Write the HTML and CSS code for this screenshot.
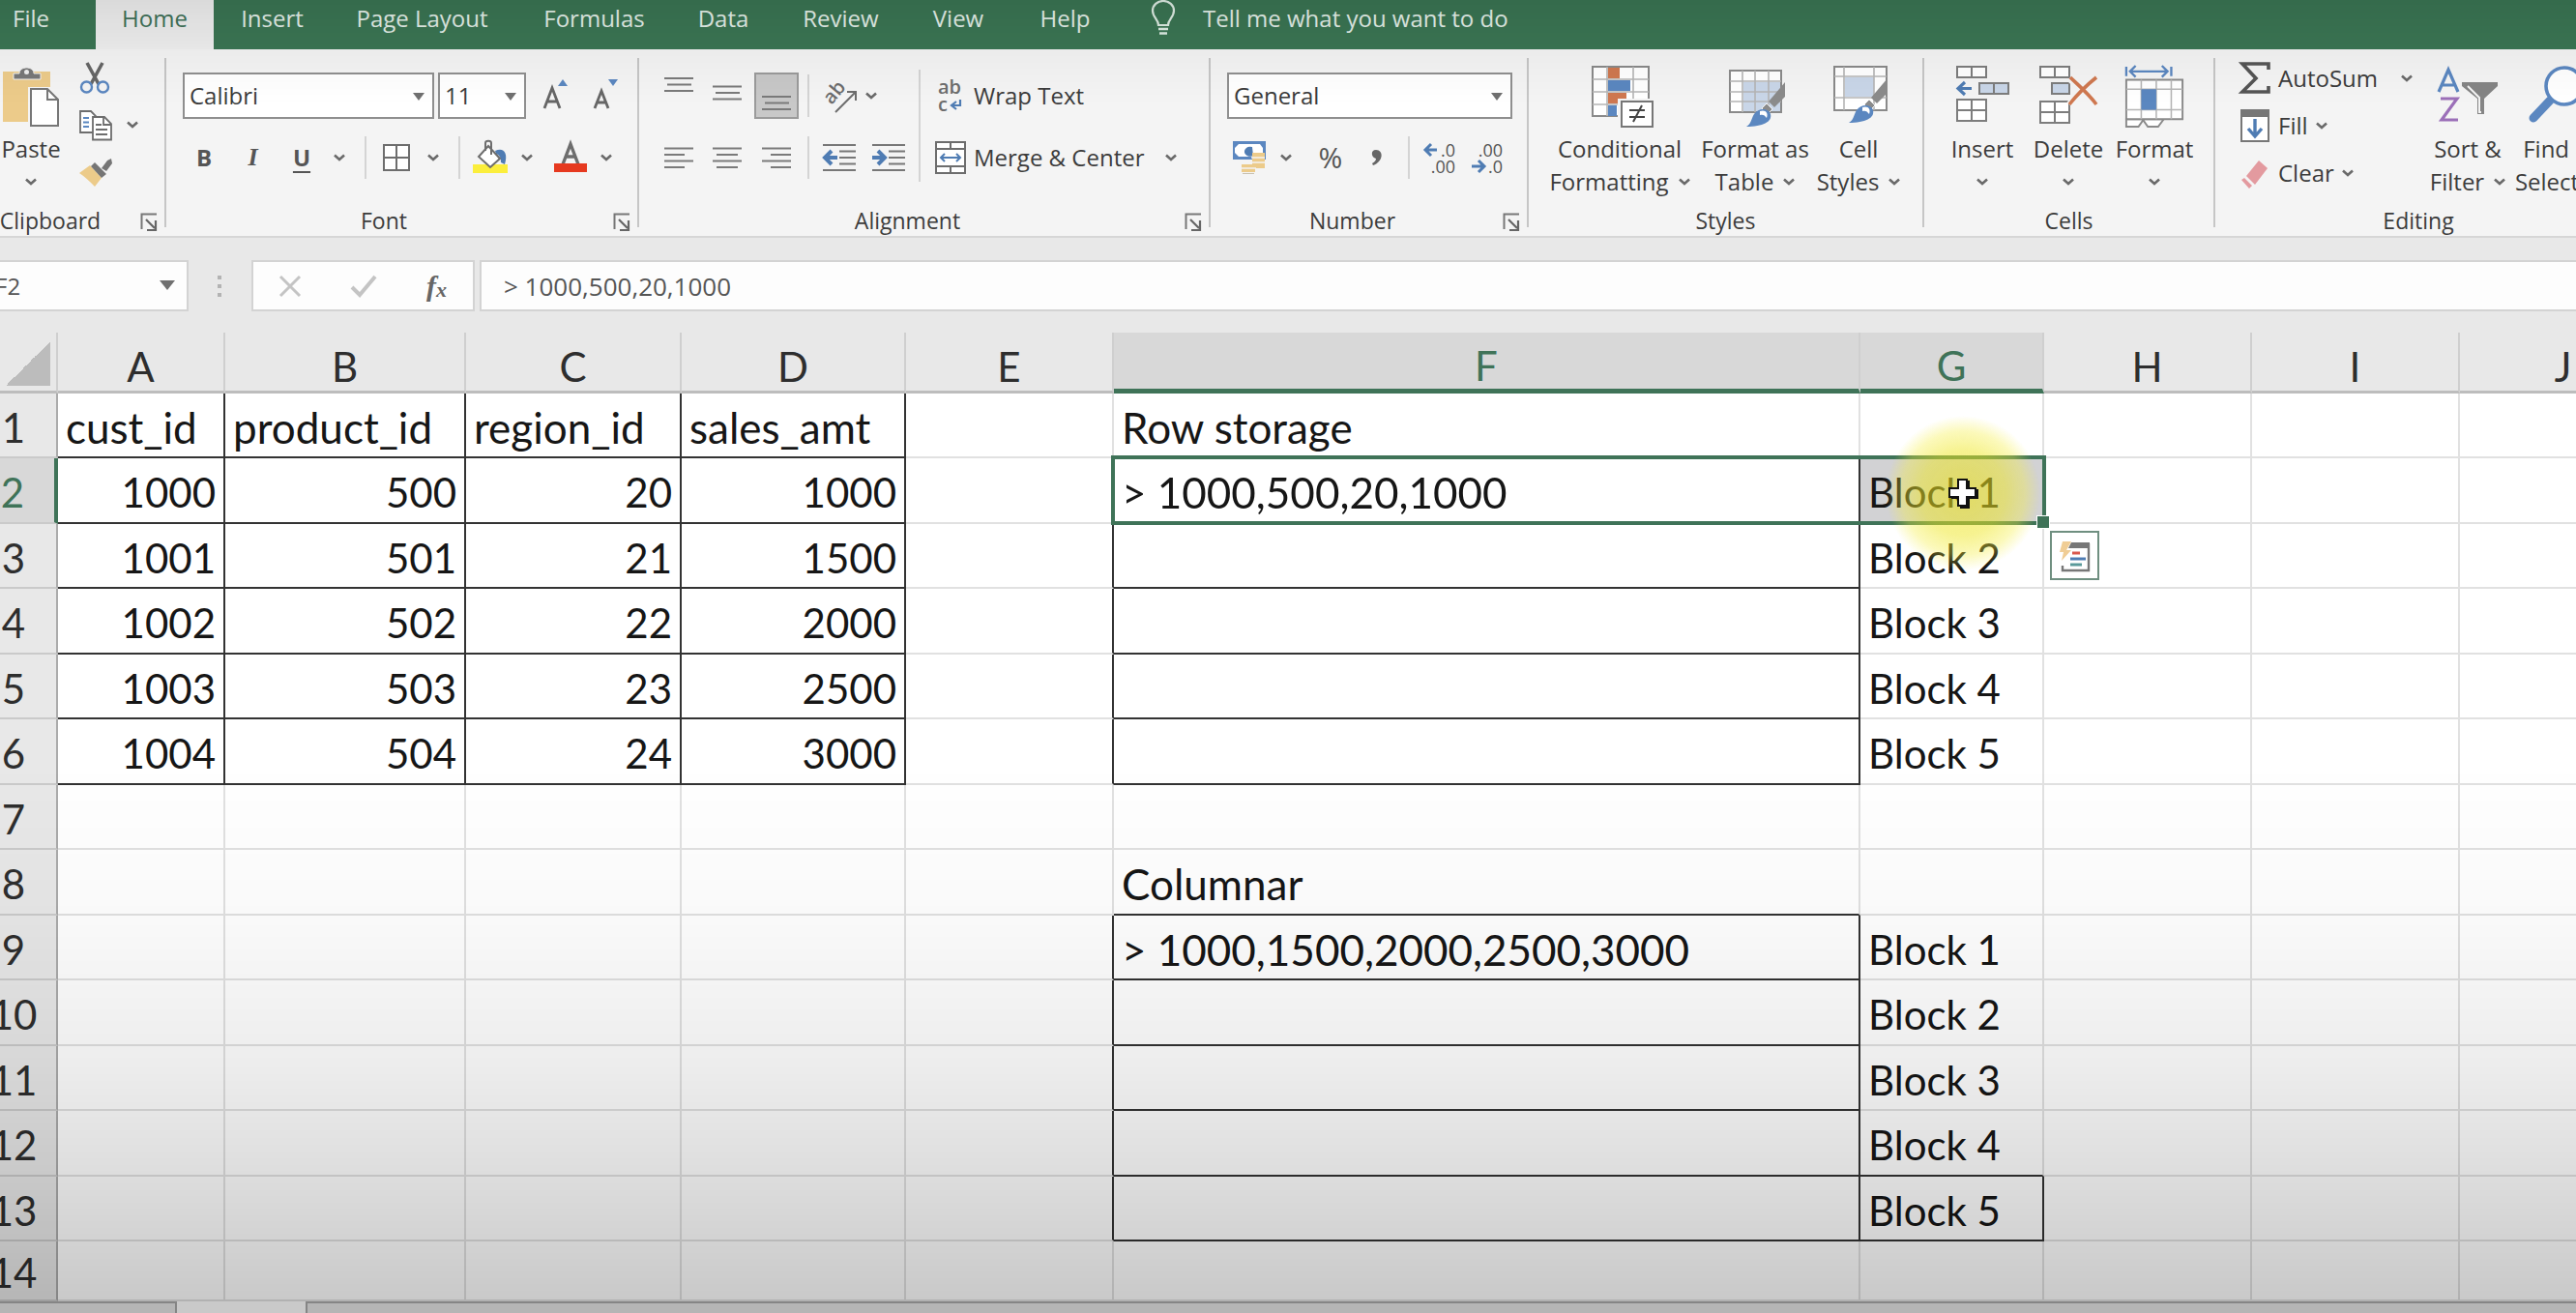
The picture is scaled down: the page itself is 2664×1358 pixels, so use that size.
FILE: index.html
```html
<!DOCTYPE html>
<html lang="en">
<head>
<meta charset="utf-8">
<title>Workbook</title>
<link rel="stylesheet" href="styles.css">
</head>
<body>
<svg class="defs" aria-hidden="true">
  <symbol id="chev" viewBox="0 0 12 8"><path d="M1 1.500l5 4.500 5-4.500" fill="none" stroke="#6a6a6a" stroke-width="2.600"/></symbol>
  <symbol id="launch" viewBox="0 0 18 20"><path d="M1.500 17V1.500H17" fill="none" stroke="#777" stroke-width="2"/><path d="M6 7l9 9M16 8v10H7" fill="none" stroke="#666" stroke-width="2.200"/></symbol>
  <symbol id="brush" viewBox="0 0 42 48"><path d="M40 1v15L29 27l-6-6z" fill="#8b8b8b"/><path d="M21 23l6 6-5 5-6-6z" fill="#8b8b8b" stroke="#f4f4f4"/><path d="M0 47c5-3 5-8 8-13 5-7 15-6 17 0 2 8-8 13-25 13z" fill="#5b87c0"/><path d="M14 31c6-2 9 2 7 7-2-3-4-4-7-3z" fill="#fff"/></symbol>
</svg>

<nav class="tabs">
  <a href="#" class="file">File</a>
  <a href="#" class="active">Home</a>
  <a href="#">Insert</a>
  <a href="#">Page Layout</a>
  <a href="#">Formulas</a>
  <a href="#">Data</a>
  <a href="#">Review</a>
  <a href="#">View</a>
  <a href="#">Help</a>
  <a href="#" class="tell">
    <svg width="26" height="36" viewBox="0 0 26 36"><path d="M8 26c0-6-6-8-6-15a11 10 0 0 1 22 0c0 7-6 9-6 15z" fill="none" stroke="#dfeee5" stroke-width="2.200"/><path d="M8 30h10M9 34.500h8" stroke="#dfeee5" stroke-width="2.400"/></svg>
    <span>Tell me what you want to do</span>
  </a>
</nav>

<main class="ribbon">
  <section class="group clipboard">
    <div class="tools">
      <button class="big paste">
        <svg width="62" height="64" viewBox="0 0 62 64"><path d="M2 6h49v52H2z" fill="#eccb8a"/><path d="M13 14V8h6c0-8 15-8 15 0h7v6z" fill="#787878" stroke="#f2f2f2" stroke-width="1"/><circle cx="26.500" cy="6.500" r="2.500" fill="#eee"/><path d="M28 22h24l9 10v31H28z" fill="#f4f4f4"/><path d="M31 24h17l11 11v27H31z" fill="#fff" stroke="#777" stroke-width="2"/><path d="M48 24v11h11" fill="none" stroke="#777" stroke-width="2"/></svg>
        <span>Paste</span>
        <svg class="chev"><use href="#chev"/></svg>
      </button>
      <div class="stack">
        <button aria-label="Cut"><svg width="32" height="32" viewBox="0 0 32 32"><path d="M8 0l12 22M24 0L12 22" stroke="#666" stroke-width="3.600"/><circle cx="7.500" cy="25" r="5.500" fill="none" stroke="#5b87c0" stroke-width="2.400"/><circle cx="24.500" cy="25" r="5.500" fill="none" stroke="#5b87c0" stroke-width="2.400"/></svg></button>
        <button aria-label="Copy"><svg width="34" height="32" viewBox="0 0 34 32"><path d="M1 1h11l5 5v17H1z" fill="#fff" stroke="#6d6d6d" stroke-width="1.800"/><path d="M4 8h6M4 12.500h6M4 17h6" stroke="#5b87c0" stroke-width="2"/><path d="M14 7h12l7 7v16.500H14z" fill="#fff" stroke="#6d6d6d" stroke-width="1.800"/><path d="M25 7v8h8M17 15h6M17 20h12M17 25h12" fill="none" stroke="#6d6d6d" stroke-width="1.800"/></svg></button>
        <button aria-label="Format Painter"><svg width="34" height="32" viewBox="0 0 34 32"><path d="M11 8l12 13-7 9C10 24 6 20 0 16z" fill="#eccb8a"/><path d="M16 5l12 12-5 4L12 9z" fill="#757575"/><path d="M23 11l6-8 4-2 1 5-6 8z" fill="#757575"/></svg></button>
      </div>
      <button class="copymenu" aria-label="Copy options"><svg class="chev"><use href="#chev"/></svg></button>
    </div>
    <footer><span>Clipboard</span><button aria-label="Clipboard settings"><svg class="launch"><use href="#launch"/></svg></button></footer>
  </section>

  <section class="group font">
    <div class="tools rows">
      <div class="row fontpick">
        <span class="pick family"><select aria-label="Font"><option>Calibri</option></select></span>
        <span class="pick size"><select aria-label="Font size"><option>11</option></select></span>
        <button aria-label="Increase font size"><svg width="30" height="34" viewBox="0 0 30 34"><path d="M2 32L10 11l8 21M5 25h10" fill="none" stroke="#666" stroke-width="2.800"/><path d="M16 9l5-7 5 7z" fill="#5b87c0"/></svg></button>
        <button aria-label="Decrease font size"><svg width="30" height="34" viewBox="0 0 30 34"><path d="M2 32L9 14l7 18M4 26h10" fill="none" stroke="#666" stroke-width="2.800"/><path d="M16 2l5 7 5-7z" fill="#5b87c0"/></svg></button>
      </div>
      <div class="row fontstyle">
        <button class="b">B</button><button class="i">I</button><button class="u">U</button>
        <button aria-label="Underline options"><svg class="chev"><use href="#chev"/></svg></button>
        <i class="sep"></i>
        <button aria-label="Borders"><svg width="28" height="28" viewBox="0 0 28 28"><path d="M1 1h26v26H1zM14 1v26M1 14h26" fill="#fff" stroke="#6d6d6d" stroke-width="2"/></svg></button>
        <button aria-label="Border options"><svg class="chev"><use href="#chev"/></svg></button>
        <i class="sep"></i>
        <button aria-label="Fill color"><svg width="38" height="36" viewBox="0 0 38 36"><path d="M24 11c8-4 14 1 10 14l-4-2c0-6-2-8-5-9z" fill="#4f7cb3"/><path d="M1 25h36v9H1z" fill="#fbee3c"/><path d="M17 6l12 13-10 9L7 17z" fill="#fff" stroke="#6d6d6d" stroke-width="2"/><path d="M14 11V3c0-3 6-3 6 0v12" fill="none" stroke="#6d6d6d" stroke-width="2"/></svg></button>
        <button aria-label="Fill options"><svg class="chev"><use href="#chev"/></svg></button>
        <button aria-label="Font color"><svg width="36" height="34" viewBox="0 0 36 34"><path d="M10 24L18 3l8 21M13 16h10" fill="none" stroke="#6d6d6d" stroke-width="3.400"/><path d="M1 23h34v9H1z" fill="#e6391f"/></svg></button>
        <button aria-label="Font color options"><svg class="chev"><use href="#chev"/></svg></button>
      </div>
    </div>
    <footer><span>Font</span><button aria-label="Font settings"><svg class="launch"><use href="#launch"/></svg></button></footer>
  </section>

  <section class="group align">
    <div class="tools">
      <div class="rows">
        <div class="row aligntop">
          <button aria-label="Top align"><svg class="al" viewBox="0 0 30 48"><path d="M0 6h30M3 12.500h25M0 19h30"/></svg></button>
          <button aria-label="Middle align"><svg class="al" viewBox="0 0 30 48"><path d="M0 14.500h30M3 21h25M0 27.500h30"/></svg></button>
          <button class="on" aria-label="Bottom align"><svg class="al" viewBox="0 0 30 48"><path d="M0 25h30M3 31.500h25M0 38h30"/></svg></button>
          <i class="sep"></i>
          <button aria-label="Orientation"><svg width="36" height="36" viewBox="0 0 36 36"><text x="0" y="0" transform="translate(10 28) rotate(-50)" class="glyph">ab</text><path d="M14 35L34 15M26 14h9v9" fill="none" stroke="#6d6d6d" stroke-width="2"/></svg></button>
          <button aria-label="Orientation options"><svg class="chev"><use href="#chev"/></svg></button>
        </div>
        <div class="row alignbot">
          <button aria-label="Align left"><svg class="al" viewBox="0 0 30 48"><path d="M0 14.500h30M0 21h21M0 27.500h30M0 34h21"/></svg></button>
          <button aria-label="Center"><svg class="al" viewBox="0 0 30 48"><path d="M0 14.500h30M4 21h22M0 27.500h30M4 34h22"/></svg></button>
          <button aria-label="Align right"><svg class="al" viewBox="0 0 30 48"><path d="M0 14.500h30M9 21h21M0 27.500h30M9 34h21"/></svg></button>
          <i class="sep"></i>
          <button aria-label="Decrease indent"><svg width="34" height="30" viewBox="0 0 34 30"><path d="M0 2h34M17 8.500h17M17 15h17M17 21.500h17M0 28h34" stroke="#777" stroke-width="2"/><path d="M15 15H2M9 8l-7 7 7 7" fill="none" stroke="#4f7cb3" stroke-width="4"/></svg></button>
          <button aria-label="Increase indent"><svg width="34" height="30" viewBox="0 0 34 30"><path d="M0 2h34M17 8.500h17M17 15h17M17 21.500h17M0 28h34" stroke="#777" stroke-width="2"/><path d="M0 15h13M6 8l7 7-7 7" fill="none" stroke="#4f7cb3" stroke-width="4"/></svg></button>
        </div>
      </div>
      <i class="sep tall"></i>
      <div class="rows wraps">
        <button class="labeled"><svg width="32" height="36" viewBox="0 0 32 36"><text x="3" y="16" class="glyph">ab</text><text x="3" y="34" class="glyph">c</text><path d="M26 22v6h-8M22 24l-5 4 5 4" fill="none" stroke="#4f7cb3" stroke-width="2.200"/></svg><span>Wrap Text</span></button>
        <div class="row">
          <button class="labeled"><svg width="32" height="34" viewBox="0 0 32 34"><path d="M1 1h30v32H1zM1 8h30M1 26h30M16 1v7M16 26v7" fill="#fff" stroke="#6d6d6d" stroke-width="2"/><path d="M6 17h20M10 13l-4 4 4 4M22 13l4 4-4 4" fill="none" stroke="#4f7cb3" stroke-width="2"/></svg><span>Merge &amp; Center</span></button>
          <button class="mergemenu" aria-label="Merge options"><svg class="chev"><use href="#chev"/></svg></button>
        </div>
      </div>
    </div>
    <footer><span>Alignment</span><button aria-label="Alignment settings"><svg class="launch"><use href="#launch"/></svg></button></footer>
  </section>

  <section class="group number">
    <div class="tools rows">
      <span class="pick format"><select aria-label="Number format"><option>General</option></select></span>
      <div class="row numstyle">
        <button aria-label="Accounting format"><svg width="36" height="36" viewBox="0 0 36 36"><path d="M1 1h34v19H1z" fill="#5b87c0"/><path d="M7 4h22l3 4v5l-3 4H7l-4-4V8z" fill="#fff"/><path d="M21 7a6 5 0 1 0 1 9z" fill="#4f7cb3"/><path d="M21 13h13v16H21zM10 25h14v8H10z" fill="#eccb8a"/><path d="M20 18h14M20 23h14M9 29h16" stroke="#f4f4f4" stroke-width="1.500"/><path d="M11 34.500h12" stroke="#c9c0ae"/></svg></button>
        <button aria-label="Accounting options"><svg class="chev"><use href="#chev"/></svg></button>
        <button class="pct">%</button>
        <button aria-label="Comma style"><svg width="12" height="18" viewBox="0 0 12 18"><path d="M5 1c8 0 8 12-3 16l-1-2c3-2 4-3 4-5C0 9-1 1 5 1z" fill="#666"/></svg></button>
        <i class="sep"></i>
        <button aria-label="Increase decimal"><svg width="34" height="34" viewBox="0 0 34 34"><path d="M14 9H2M8 3L2 9l6 6" fill="none" stroke="#4f7cb3" stroke-width="3"/><text x="33" y="16" class="dec">.0</text><text x="33" y="33" class="dec">.00</text></svg></button>
        <button aria-label="Decrease decimal"><svg width="34" height="34" viewBox="0 0 34 34"><path d="M1 26h13M8 20l6 6-6 6" fill="none" stroke="#4f7cb3" stroke-width="3"/><text x="33" y="16" class="dec">.00</text><text x="33" y="33" class="dec">.0</text></svg></button>
      </div>
    </div>
    <footer><span>Number</span><button aria-label="Number settings"><svg class="launch"><use href="#launch"/></svg></button></footer>
  </section>

  <section class="group styles">
    <div class="tools">
      <button class="big">
        <svg width="64" height="64" viewBox="-3 0 64 64"><path d="M1 1h58v51H1z" fill="#fff" stroke="#8a8a8a" stroke-width="2"/><path d="M16 1v51M43 1v51M1 14h58M1 27h58M1 40h58" stroke="#b5b5b5" stroke-width="1.600"/><path d="M17 2h12v11H17zM17 28h19v11H17z" fill="#cf7850"/><path d="M17 15h23v11H17zM17 41h9v11h-9z" fill="#5b87c0"/><path d="M27 34h37v30H27z" fill="#f4f4f4"/><path d="M31 37h32v26H31z" fill="#fff" stroke="#777" stroke-width="2"/><path d="M39 46h16M39 53h16M52 41l-9 17" stroke="#444" stroke-width="2"/></svg>
        <span>Conditional</span><span>Formatting <svg class="chev"><use href="#chev"/></svg></span>
      </button>
      <button class="big">
        <svg width="64" height="64" viewBox="-5 0 64 64"><path d="M1 5h53v43H1z" fill="#fff" stroke="#8a8a8a" stroke-width="2"/><path d="M15 17h38v30H15z" fill="#c9d6e8"/><path d="M14 5v43M27 5v43M41 5v43M1 16h53M1 27h53M1 37h53" stroke="#b5b5b5" stroke-width="1.600"/><use href="#brush" x="14" y="16" width="50" height="48"/></svg>
        <span>Format as</span><span>Table <svg class="chev"><use href="#chev"/></svg></span>
      </button>
      <button class="big">
        <svg width="64" height="64" viewBox="-6 0 64 64"><path d="M1 1h54v45H1z" fill="#fff" stroke="#8a8a8a" stroke-width="2"/><path d="M12 12h30v20H12z" fill="#c9d6e8"/><path d="M11 1v45M42 1v45M1 11h54M1 33h54" stroke="#b5b5b5" stroke-width="1.600"/><use href="#brush" x="12" y="12" width="50" height="48"/></svg>
        <span>Cell</span><span>Styles <svg class="chev"><use href="#chev"/></svg></span>
      </button>
    </div>
    <footer><span>Styles</span></footer>
  </section>

  <section class="group cells">
    <div class="tools">
      <button class="big">
        <svg width="58" height="64" viewBox="0 0 58 64"><g fill="#fff" stroke="#7d7d7d" stroke-width="2"><path d="M3 1h30v11H3zM18 1v11M3 35h30v22H3zM18 35v22M3 46h30"/><path d="M26 18h30v11H26zM41 18v11" fill="#c9d6e8"/></g><path d="M18 23.500H4M11 17l-7 6.500 7 6.500" fill="none" stroke="#4f7cb3" stroke-width="3.200"/></svg>
        <span>Insert</span><svg class="chev"><use href="#chev"/></svg>
      </button>
      <button class="big">
        <svg width="62" height="64" viewBox="0 0 62 64"><g fill="#fff" stroke="#7d7d7d" stroke-width="2"><path d="M2 1h30v11H2zM17 1v11M2 37h30v22H2zM17 37v22M2 48h30"/><path d="M14 18h18v11H14z" fill="#c9d6e8"/></g><path d="M32 13l28 27M60 13L32 40" stroke="#f4f4f4" stroke-width="7"/><path d="M33 12c8 8 18 16 27 28M60 12C50 20 40 30 32 40" fill="none" stroke="#cf7850" stroke-width="3.600"/></svg>
        <span>Delete</span><svg class="chev"><use href="#chev"/></svg>
      </button>
      <button class="big">
        <svg width="62" height="66" viewBox="0 0 62 66"><path d="M1 1v10M49 1v10M5 6h40M11 0L5 6l6 6M39 0l6 6-6 6" fill="none" stroke="#5b87c0" stroke-width="2.400"/><g fill="#fff" stroke="#8a8a8a" stroke-width="2"><path d="M1 57v8h13l5-7 5 7h11l6-8z"/><path d="M1 15h60v42H1z"/></g><path d="M17 15v42M33 15v42M49 15v42M1 25h60M1 47h60" stroke="#b5b5b5" stroke-width="1.600"/><path d="M17 25h16v22H17z" fill="#5b87c0"/></svg>
        <span>Format</span><svg class="chev"><use href="#chev"/></svg>
      </button>
    </div>
    <footer><span>Cells</span></footer>
  </section>

  <section class="group editing">
    <div class="tools">
      <div class="stack">
        <button class="labeled sum"><svg width="32" height="34" viewBox="0 0 32 34"><path d="M30 8V2H3l14 15L3 31h27v-6" fill="none" stroke="#555" stroke-width="3.600"/></svg><span>AutoSum</span><svg class="chev"><use href="#chev"/></svg></button>
        <button class="labeled"><svg width="32" height="34" viewBox="0 0 32 34"><path d="M2 1h28v32H2z" fill="#fff" stroke="#777" stroke-width="2"/><path d="M1 0h30v8H1z" fill="#777"/><path d="M16 10v17M9 20l7 8 7-8" fill="none" stroke="#4f7cb3" stroke-width="3.400"/></svg><span>Fill</span><svg class="chev"><use href="#chev"/></svg></button>
        <button class="labeled"><svg width="32" height="34" viewBox="0 0 32 34"><path d="M20 4l9 8-13 17-9-9z" fill="#e39a9f"/><path d="M5 22l8 8-3 3-8-9z" fill="#e39a9f"/></svg><span>Clear</span><svg class="chev"><use href="#chev"/></svg></button>
      </div>
      <button class="big">
        <svg width="64" height="64" viewBox="0 0 64 64"><path d="M2 27L12 4l10 23M5 20h14" fill="none" stroke="#5b87c0" stroke-width="3.200"/><path d="M4 34h17L5 56h17" fill="none" stroke="#9b6fb8" stroke-width="3.200"/><path d="M26 17h37v4L49 34v16h-7V34L26 21z" fill="#858585"/><path d="M32 21l12 12v15h2" fill="none" stroke="#f4f4f4" stroke-width="2"/></svg>
        <span>Sort &amp;</span><span>Filter <svg class="chev"><use href="#chev"/></svg></span>
      </button>
      <button class="big">
        <svg width="60" height="64" viewBox="0 0 60 64"><path d="M22 36L5 54" stroke="#5b87c0" stroke-width="9" stroke-linecap="round"/><circle cx="37" cy="21" r="19" fill="#fff" stroke="#5b87c0" stroke-width="3.600"/></svg>
        <span>Find &amp;</span><span>Select <svg class="chev"><use href="#chev"/></svg></span>
      </button>
    </div>
    <footer><span>Editing</span></footer>
  </section>
</main>

<div class="formulabar">
  <div class="namebox"><input aria-label="Name box" value="F2"></div>
  <svg class="dots" width="6" height="24" viewBox="0 0 6 24"><path d="M1 1h4v4H1zM1 10h4v4H1zM1 19h4v4H1z" fill="#b3b3b3"/></svg>
  <div class="fx">
    <button aria-label="Cancel"><svg width="24" height="22" viewBox="0 0 24 22"><path d="M2 1l20 20M22 1L2 21" stroke="#c4c4c4" stroke-width="3"/></svg></button>
    <button aria-label="Enter"><svg width="28" height="24" viewBox="0 0 28 24"><path d="M2 13l8 8L26 2" fill="none" stroke="#c4c4c4" stroke-width="4"/></svg></button>
    <button class="fn"><i>f</i><i class="x">x</i></button>
  </div>
  <input class="formula" aria-label="Formula" value="&gt; 1000,500,20,1000">
</div>

<div class="sheet">
  <table>
    <colgroup><col class="rh"><col class="ca"><col class="cb"><col class="cc"><col class="cd"><col class="ce"><col class="cf"><col class="cg"><col class="ce"><col class="ce"><col class="ce"></colgroup>
    <thead><tr><th class="corner"></th><th>A</th><th>B</th><th>C</th><th>D</th><th>E</th><th class="sel">F</th><th class="sel">G</th><th>H</th><th>I</th><th>J</th></tr></thead>
    <tbody>
      <tr><th>1</th><td class="box">cust_id</td><td class="box">product_id</td><td class="box">region_id</td><td class="box">sales_amt</td><td></td><td>Row storage</td><td></td><td></td><td></td><td></td></tr>
      <tr><th class="sel">2</th><td class="box n">1000</td><td class="box n">500</td><td class="box n">20</td><td class="box n">1000</td><td class="bl"></td><td class="box anchor">&gt; 1000,500,20,1000
        <div class="selection"></div><div class="spot"></div>
        <svg class="cursor" width="34" height="34" viewBox="0 0 34 34"><path d="M13 3h10v9h9v10h-9v10H13V22H4V12h9z" fill="#111"/><path d="M11 2h9v9h9v9h-9v9h-9v-9H2v-9h9z" fill="#fff" stroke="#111" stroke-width="2"/></svg>
        <button class="quick" aria-label="Quick analysis"><svg width="34" height="34" viewBox="0 0 34 34"><path d="M4 27v5h27V4" fill="none" stroke="#777" stroke-width="2.400"/><path d="M13 3h19v6H10z" fill="#777"/><path d="M4 2h9L8 11h5L3 22l2-9H1z" fill="#f0cd95"/><path d="M14 14h8" stroke="#d9594c" stroke-width="3"/><path d="M12 20h16" stroke="#4f7cb3" stroke-width="3"/><path d="M12 26h12" stroke="#5a9a9a" stroke-width="3"/></svg></button></td><td class="picked k">Block 1</td><td></td><td></td><td></td></tr>
      <tr><th>3</th><td class="box n">1001</td><td class="box n">501</td><td class="box n">21</td><td class="box n">1500</td><td class="bl"></td><td class="box"></td><td class="k">Block 2</td><td></td><td></td><td></td></tr>
      <tr><th>4</th><td class="box n">1002</td><td class="box n">502</td><td class="box n">22</td><td class="box n">2000</td><td class="bl"></td><td class="box"></td><td class="k">Block 3</td><td></td><td></td><td></td></tr>
      <tr><th>5</th><td class="box n">1003</td><td class="box n">503</td><td class="box n">23</td><td class="box n">2500</td><td class="bl"></td><td class="box"></td><td class="k">Block 4</td><td></td><td></td><td></td></tr>
      <tr><th>6</th><td class="box n">1004</td><td class="box n">504</td><td class="box n">24</td><td class="box n">3000</td><td class="bl"></td><td class="box"></td><td class="k">Block 5</td><td></td><td></td><td></td></tr>
      <tr><th>7</th><td></td><td></td><td></td><td></td><td></td><td></td><td></td><td></td><td></td><td></td></tr>
      <tr><th>8</th><td></td><td></td><td></td><td></td><td></td><td class="bt">Columnar</td><td></td><td></td><td></td><td></td></tr>
      <tr><th>9</th><td></td><td></td><td></td><td></td><td class="bl"></td><td class="box">&gt; 1000,1500,2000,2500,3000</td><td class="k">Block 1</td><td></td><td></td><td></td></tr>
      <tr><th>10</th><td></td><td></td><td></td><td></td><td class="bl"></td><td class="box"></td><td class="k">Block 2</td><td></td><td></td><td></td></tr>
      <tr><th>11</th><td></td><td></td><td></td><td></td><td class="bl"></td><td class="box"></td><td class="k">Block 3</td><td></td><td></td><td></td></tr>
      <tr><th>12</th><td></td><td></td><td></td><td></td><td class="bl"></td><td class="box"></td><td class="k bt">Block 4</td><td></td><td></td><td></td></tr>
      <tr><th>13</th><td></td><td></td><td></td><td></td><td class="bl"></td><td class="box"></td><td class="box k">Block 5</td><td></td><td></td><td></td></tr>
      <tr><th>14</th><td></td><td></td><td></td><td></td><td></td><td></td><td></td><td></td><td></td><td></td></tr>
    </tbody>
  </table>
</div>
<footer class="sheettabs"><span class="left"></span><span class="current"></span><span class="rest"></span></footer>
</body>
</html>
```
FILE: styles.css
```css
* { box-sizing: border-box; }

body {
  margin: 0;
  height: 100vh;
  display: flex;
  flex-direction: column;
  overflow: hidden;
  background: #e8e8e8;
  color: #3c3c3c;
  font: 24px/34px "Open Sans", "Noto Sans", sans-serif;
}

/* Shade that deepens towards the foot of the window */
body::after {
  content: "";
  position: fixed;
  inset: 0;
  pointer-events: none;
  background: linear-gradient(rgba(0,0,0,.09), rgba(0,0,0,.03) 4%, transparent 8%, transparent 58%, rgba(0,0,0,.025) 70%, rgba(0,0,0,.07) 81%, rgba(0,0,0,.12) 88%, rgba(0,0,0,.21) 99%);
}

.defs { position: absolute; width: 0; height: 0; }
svg { flex: none; display: block; overflow: visible; }
button, input, select { font: inherit; color: inherit; border: 0; padding: 0; margin: 0; background: none; }
button { display: flex; align-items: center; justify-content: center; white-space: nowrap; }
.chev { width: 12px; height: 8px; }
.launch { width: 18px; height: 20px; }

/* Ribbon tabs */
.tabs {
  flex: none;
  height: 51px;
  display: grid;
  grid-template-columns: 99px 122px 121px 189px 167px 100px 143px 100px 121px 1fr;
  background: #3b7654;
}
.tabs a {
  display: flex;
  justify-content: center;
  color: #e4f0e9;
  text-decoration: none;
  line-height: 38px;
  white-space: nowrap;
}
.tabs .file { justify-content: flex-start; padding-left: 13px; }
.tabs .active { background: #f0f0f0; color: #41735a; }
.tabs .tell { justify-content: flex-start; gap: 28px; padding-left: 28px; }

/* Ribbon */
.ribbon {
  flex: none;
  height: 195px;
  display: flex;
  overflow: hidden;
  background: #f4f4f4;
  border-bottom: 2px solid #d6d6d6;
}
.group {
  flex: none;
  margin: 9px 0;
  border-right: 2px solid #c6c6c6;
  display: flex;
  flex-direction: column;
}
.clipboard { width: 172px; }
.font { width: 489px; }
.align { width: 591px; }
.number { width: 329px; }
.styles { width: 409px; }
.cells { width: 301px; }
.editing { width: 422px; }

.tools { flex: 1; min-height: 0; display: flex; }
.rows { display: flex; flex-direction: column; gap: 16px; padding-top: 15px; }
.row { display: flex; height: 48px; }
.group footer {
  flex: none;
  height: 34px;
  margin-bottom: -10px;
  position: relative;
  display: flex;
  justify-content: center;
  font-size: 23px;
}
.group footer button { position: absolute; right: 7px; top: 9px; }
.clipboard footer { padding-right: 66px; }
.font footer { padding-right: 37px; }
.align footer { padding-right: 34px; }
.number footer { padding-right: 34px; }

.big { flex-direction: column; justify-content: flex-start; padding-top: 8px; }
.big > svg:first-child { margin-bottom: 5px; height: 64px; }
.big > .chev { margin-top: 13px; }
.big span { display: flex; align-items: center; gap: 10px; height: 34px; line-height: 34px; }
.paste { width: 64px; }
.stack { display: flex; flex-direction: column; align-items: flex-start; padding-top: 5px; gap: 17px; }
.clipboard .stack { padding-left: 18px; }
.stack > button { height: 32px; }
.copymenu { align-self: flex-start; height: 32px; margin: 53px 0 0 15px; }

.sep { width: 2px; height: 44px; margin: 2px auto; background: #d4d4d4; }
.sep.tall { height: 116px; margin: 12px 15px 0 6px; }

.pick { position: relative; display: flex; height: 48px; border: 2px solid #8f8f8f; background: #fff; }
.pick::after, .namebox::after {
  content: "";
  position: absolute;
  right: 8px;
  top: 19px;
  border: 6px solid transparent;
  border-top: 8px solid #707070;
  border-bottom: 0;
}
.pick select { appearance: none; width: 100%; padding-left: 5px; }
.family { width: 260px; margin-right: 4px; }
.size { width: 91px; margin-right: 6px; }
.fontpick { padding-left: 17px; }
.fontpick button { width: 52px; height: 44px; }

.fontstyle { display: grid; grid-template-columns: 50px 51px 50px 28px 26px 38px 38px 16px 47px 30px 60px 14px; padding-left: 14px; }
.b { font-weight: 700; color: #555; }
.i { font: italic 700 26px "Liberation Serif", serif; color: #555; }
.u { font-weight: 700; color: #555; text-decoration: underline; text-underline-offset: 5px; }

.al { width: 30px; height: 48px; fill: none; stroke: #7a7a7a; stroke-width: 2px; }
.aligntop, .alignbot { display: grid; padding-left: 16px; }
.aligntop { grid-template-columns: 50px 50px 52px 13px 52px 14px; }
.alignbot { grid-template-columns: 50px 50px 52px 13px 52px 50px; }
.on { background: #c8c8c8; box-shadow: inset 0 0 0 2px #9b9b9b; margin: 0 3px; }
.glyph { font: 600 20px "Open Sans", sans-serif; fill: #6d6d6d; }
.labeled { height: 48px; gap: 8px; }
.wraps .labeled { align-self: flex-start; }
.mergemenu { padding-left: 22px; }

.format { width: 295px; margin-left: 17px; }
.numstyle { display: grid; grid-template-columns: 46px 30px 62px 34px 32px 31px 68px; padding-left: 17px; }
.pct { font-size: 30px; color: #555; }
.dec { font: 18px "Open Sans", sans-serif; fill: #555; text-anchor: end; }

.styles .tools { display: grid; grid-template-columns: 160px 120px 94px; padding-left: 14px; }
.cells .tools { display: grid; grid-template-columns: 90px 88px 90px; padding-left: 15px; }
.editing .tools { display: grid; grid-template-columns: 190px 92px 94px; padding-left: 25px; }
.sum .chev { margin-left: 16px; }

/* Formula bar */
.formulabar { flex: none; height: 98px; padding: 23px 0 22px; display: flex; }
.namebox { position: relative; width: 195px; background: #fdfdfd; border: 2px solid #d3d3d3; border-left: 0; display: flex; }
.namebox input { width: 100%; margin-left: -5px; color: #555; }
.namebox::after { right: 12px; border-width: 8px; border-top-width: 10px; border-bottom: 0; }
.dots { margin: 15px 30px 0 29px; }
.fx { width: 231px; margin-right: 5px; background: #fdfdfd; border: 2px solid #d3d3d3; display: grid; grid-template-columns: 76px 76px 75px; }
.fn { font: italic 700 30px "Liberation Serif", serif; color: #666; }
.fn .x { font-size: 22px; padding-top: 9px; }
.formula { flex: 1; min-width: 0; padding-left: 23px; font-size: 26px; color: #555; background: #fdfdfd; border: 2px solid #d3d3d3; border-right: 0; }

/* Sheet */
.sheet { flex: 1; min-height: 0; overflow: hidden; background: #fff; }
table {
  margin-left: -30px;
  width: 2789px;
  table-layout: fixed;
  border-spacing: 0;
  font: 44px/56px Lato, "Open Sans", sans-serif;
  color: #161616;
}
.rh { width: 90px; }
.ca { width: 173px; }
.cb { width: 249px; }
.cc { width: 223px; }
.cd { width: 232px; }
.ce { width: 215px; }
.cf { width: 772px; }
.cg { width: 190px; }
th { font-weight: 400; font-size: 42px; padding: 4px 0 0; background: #e8e8e8; color: #2e2e2e; }
thead th { height: 63px; padding-top: 10px; line-height: 48px; border-right: 2px solid #cfcfcf; border-bottom: 3px solid #bdbdbd; }
tbody th { border-right: 2px solid #ababab; border-bottom: 2px solid #cacaca; }
thead .sel { background: #d8d8d8; color: #3f7358; border-bottom: 5px solid #3f7358; }
tbody .sel { background: #d8d8d8; color: #3f7358; border-right: 4px solid #3f7358; }
.corner { background: linear-gradient(to bottom right, transparent 50%, #bcbcbc 50%) no-repeat 36px 9px / 46px 46px #e8e8e8; }
td { height: 67px; padding: 4px 8px 0; white-space: nowrap; border-right: 2px solid #e1e1e1; border-bottom: 2px solid #e1e1e1; }
tbody tr:nth-child(even) td { height: 68px; }
tbody tr:last-child td { height: 62px; }
.box { border-color: #333; }
.bl { border-right-color: #333; }
.bt { border-bottom-color: #333; }
.n { text-align: right; font-size: 42px; }
.k { font-size: 42px; }
.picked { background: #d2d2d4; }

.anchor { position: relative; z-index: 1; }
.selection { position: absolute; left: -3px; top: -3px; width: 967px; height: 72px; border: 4px solid #3f7358; }
.selection::after { content: ""; position: absolute; right: -8px; bottom: -8px; width: 12px; height: 12px; background: #3f7358; border: 1px solid #fff; }
.spot {
  position: absolute;
  left: 798px;
  top: -44px;
  width: 160px;
  height: 160px;
  border-radius: 50%;
  background: radial-gradient(closest-side, rgba(236,226,25,.6), rgba(238,230,35,.5) 55%, rgba(245,238,60,.35) 80%, rgba(250,245,90,0));
}
.cursor { position: absolute; left: 862px; top: 20px; }
.quick { position: absolute; left: 968px; top: 75px; width: 51px; height: 51px; background: #fff; border: 2px solid #6f8f80; }

.sheettabs { flex: none; height: 12px; display: flex; background: #fff; }
.sheettabs span { border-top: 2px solid #a9a9a9; background: #e6e6e6; }
.sheettabs .left { width: 183px; border-right: 2px solid #a9a9a9; }
.sheettabs .current { width: 133px; background: #fff; border-top-color: #fff; }
.sheettabs .rest { flex: 1; border-left: 2px solid #a9a9a9; }
```
